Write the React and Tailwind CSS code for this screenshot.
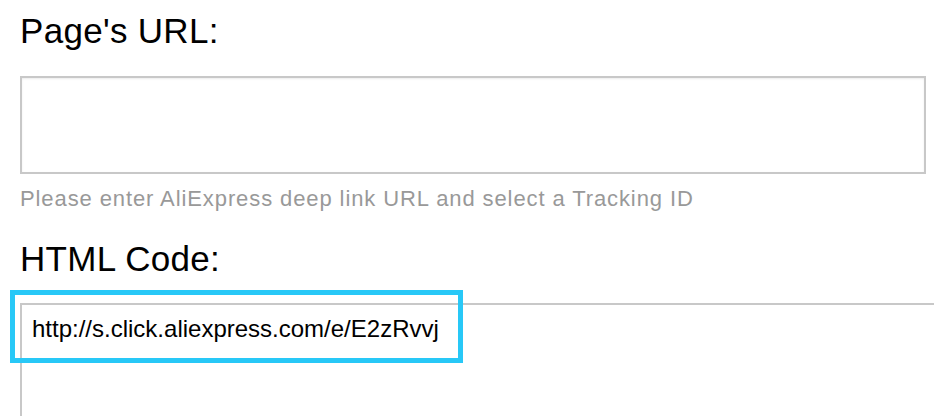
export default function App() {
  return (
    <div
      className="h-[416px] w-full overflow-hidden bg-white pl-[20px] text-black"
      style={{ fontFamily: '"Liberation Sans", Arial, sans-serif' }}
    >
      <h1 className="mt-[13px] text-[35px] leading-[35px] font-normal tracking-[0.3px]">
        Page's URL:
      </h1>
      <div className="mt-[28px] h-[98px] w-[906px] border-2 border-[#c8c8c8] bg-white shadow-[inset_0_1px_2px_rgba(0,0,0,0.08)]" />
      <p className="mt-[14px] text-[22px] leading-[22px] tracking-[0.9px] text-[#999999]">
        Please enter AliExpress deep link URL and select a Tracking ID
      </p>
      <h2 className="mt-[31px] text-[35px] leading-[35px] font-normal tracking-[0.3px]">
        HTML Code:
      </h2>
      <div className="relative mt-[27px]">
        <div className="h-[200px] border-t-2 border-l-2 border-[#c8c8c8] pt-[12px] pl-[10px]">
          <span className="text-[24px] leading-[24px]">
            http://s.click.aliexpress.com/e/E2zRvvj
          </span>
        </div>
        <div className="absolute top-[-13px] left-[-10px] h-[73px] w-[453px] border-[5px] border-[#28c8f7]" />
      </div>
    </div>
  );
}
